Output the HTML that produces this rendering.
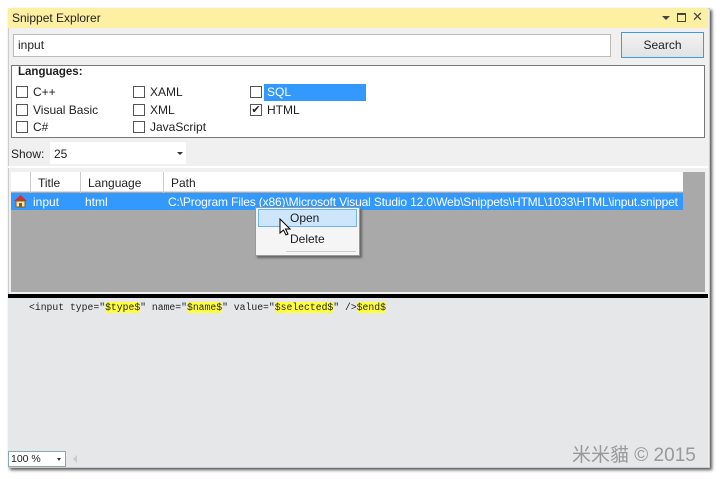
<!DOCTYPE html>
<html><head><meta charset="utf-8"><style>
*{box-sizing:border-box;margin:0;padding:0}
body{width:720px;height:479px;background:#fff;position:relative;overflow:hidden;font-family:"Liberation Sans",sans-serif;font-size:12px;color:#1e1e1e}
.a{position:absolute}
.cb{position:absolute;width:12px;height:12px;border:1px solid #555;background:#fff}
.lbl{position:absolute;font-size:12px}
</style></head><body>
<div class="a" style="left:8px;top:8px;width:702px;height:460px;background:#f0f0f0;box-shadow:2px 2px 3px #555;border:1px solid #ccc"></div>
<div class="a" style="left:8px;top:8px;width:700px;height:20px;background:#fdf0a2"></div>
<div class="a" style="left:12px;top:11px;font-size:12px">Snippet Explorer</div>
<div class="a" style="left:662px;top:16px;width:0;height:0;border-left:4px solid transparent;border-right:4px solid transparent;border-top:4px solid #444"></div>
<div class="a" style="left:677px;top:13px;width:9px;height:9px;border:1px solid #444;border-top-width:2px"></div>
<div class="a" style="left:692px;top:9px;font-size:13px;color:#444">✕</div>
<div class="a" style="left:13px;top:34px;width:598px;height:23px;background:#fff;border:1px solid #bbb;padding:3px 4px;font-size:12px">input</div>
<div class="a" style="left:621px;top:32px;width:83px;height:26px;background:linear-gradient(#f2f2f2,#e2e2e2);border:1px solid #3c9be8;text-align:center;line-height:24px">Search</div>
<div class="a" style="left:11px;top:65px;width:694px;height:73px;background:#fff;border:1px solid #777"></div>
<div class="lbl" style="left:18px;top:66px;font-weight:bold;font-size:11.5px">Languages:</div>
<div class="cb" style="left:16px;top:86px"></div><div class="lbl" style="left:33px;top:85px">C++</div>
<div class="cb" style="left:16px;top:104px"></div><div class="lbl" style="left:33px;top:103px">Visual Basic</div>
<div class="cb" style="left:16px;top:121px"></div><div class="lbl" style="left:33px;top:120px">C#</div>
<div class="cb" style="left:133px;top:86px"></div><div class="lbl" style="left:150px;top:85px">XAML</div>
<div class="cb" style="left:133px;top:104px"></div><div class="lbl" style="left:150px;top:103px">XML</div>
<div class="cb" style="left:133px;top:121px"></div><div class="lbl" style="left:150px;top:120px">JavaScript</div>
<div class="cb" style="left:250px;top:86px"></div>
<div class="a" style="left:264px;top:84px;width:102px;height:17px;background:#3399ff"></div><div class="lbl" style="left:267px;top:85px;color:#fff">SQL</div>
<div class="cb" style="left:250px;top:104px;font-size:11px;line-height:10px;text-align:center">✔</div><div class="lbl" style="left:267px;top:103px">HTML</div>
<div class="lbl" style="left:11px;top:147px">Show:</div>
<div class="a" style="left:50px;top:142px;width:136px;height:22px;background:#fff"></div>
<div class="lbl" style="left:54px;top:147px">25</div>
<div class="a" style="left:177px;top:152px;border-left:3px solid transparent;border-right:3px solid transparent;border-top:3px solid #333"></div>
<div class="a" style="left:8px;top:166px;width:700px;height:2px;background:#fff"></div>
<div class="a" style="left:11px;top:172px;width:694px;height:120px;background:#a9a9a9"></div>
<div class="a" style="left:11px;top:172px;width:672px;height:20px;background:#fff;border-bottom:1px solid #ddd"></div>
<div class="a" style="left:30px;top:172px;width:1px;height:38px;background:#ccc"></div>
<div class="a" style="left:80px;top:172px;width:1px;height:38px;background:#ccc"></div>
<div class="a" style="left:163px;top:172px;width:1px;height:38px;background:#ccc"></div>
<div class="lbl" style="left:38px;top:176px">Title</div>
<div class="lbl" style="left:88px;top:176px">Language</div>
<div class="lbl" style="left:171px;top:176px">Path</div>
<div class="a" style="left:11px;top:193px;width:672px;height:17px;background:#3399ff"></div>
<svg class="a" style="left:13px;top:194px" width="15" height="14"><path d="M1 7 L7.5 1 L14 7 Z" fill="#c33"/><rect x="3" y="7" width="9" height="6" fill="#f5e6b0" stroke="#8a5a1a"/><rect x="6" y="9" width="3" height="4" fill="#8a5a1a"/></svg>
<div class="lbl" style="left:33px;top:195px;color:#fff">input</div>
<div class="lbl" style="left:85px;top:195px;color:#fff">html</div>
<div class="lbl" style="left:168px;top:195px;color:#fff;letter-spacing:-0.15px">C:\Program Files (x86)\Microsoft Visual Studio 12.0\Web\Snippets\HTML\1033\HTML\input.snippet</div>
<div class="a" style="left:255px;top:207px;width:105px;height:49px;background:#f5f5f5;border:1px solid #999;box-shadow:2px 2px 2px #666"></div>
<div class="a" style="left:258px;top:209px;width:99px;height:18px;background:#cde6fb;border:1px solid #6fb3ee"></div>
<div class="lbl" style="left:290px;top:211px">Open</div>
<div class="lbl" style="left:290px;top:232px">Delete</div>
<div class="a" style="left:286px;top:251px;width:70px;height:1px;background:#ccc"></div>
<svg class="a" style="left:279px;top:218px" width="12" height="18"><path d="M1 1 L1 15 L4.5 12 L7 17 L9 16 L6.5 11 L11 11 Z" fill="#fff" stroke="#000"/></svg>
<div class="a" style="left:8px;top:294px;width:700px;height:4px;background:#000"></div>
<div class="a" style="left:8px;top:298px;width:700px;height:169px;background:#e6e7e9"></div>
<div class="a" style="left:29px;top:302px;font-family:'Liberation Mono',monospace;font-size:9.75px;white-space:pre">&lt;input type="<span style="background:#ffff3c">$type$</span>" name="<span style="background:#ffff3c">$name$</span>" value="<span style="background:#ffff3c">$selected$</span>" /&gt;<span style="background:#ffff3c">$end$</span></div>
<div class="a" style="left:8px;top:451px;width:58px;height:16px;background:#fff;border:1px solid #8aa;font-size:10.5px;padding:1px 2px">100 %</div>
<div class="a" style="left:57px;top:458px;border-left:2.5px solid transparent;border-right:2.5px solid transparent;border-top:3px solid #333"></div>
<div class="a" style="left:73px;top:455px;border-top:4px solid transparent;border-bottom:4px solid transparent;border-right:4px solid #ccc"></div>
<div class="a" style="left:572px;top:440px;font-family:'Liberation Sans','Noto Sans CJK SC',sans-serif;font-size:19px;color:#999">米米貓 © 2015</div>
</body></html>
